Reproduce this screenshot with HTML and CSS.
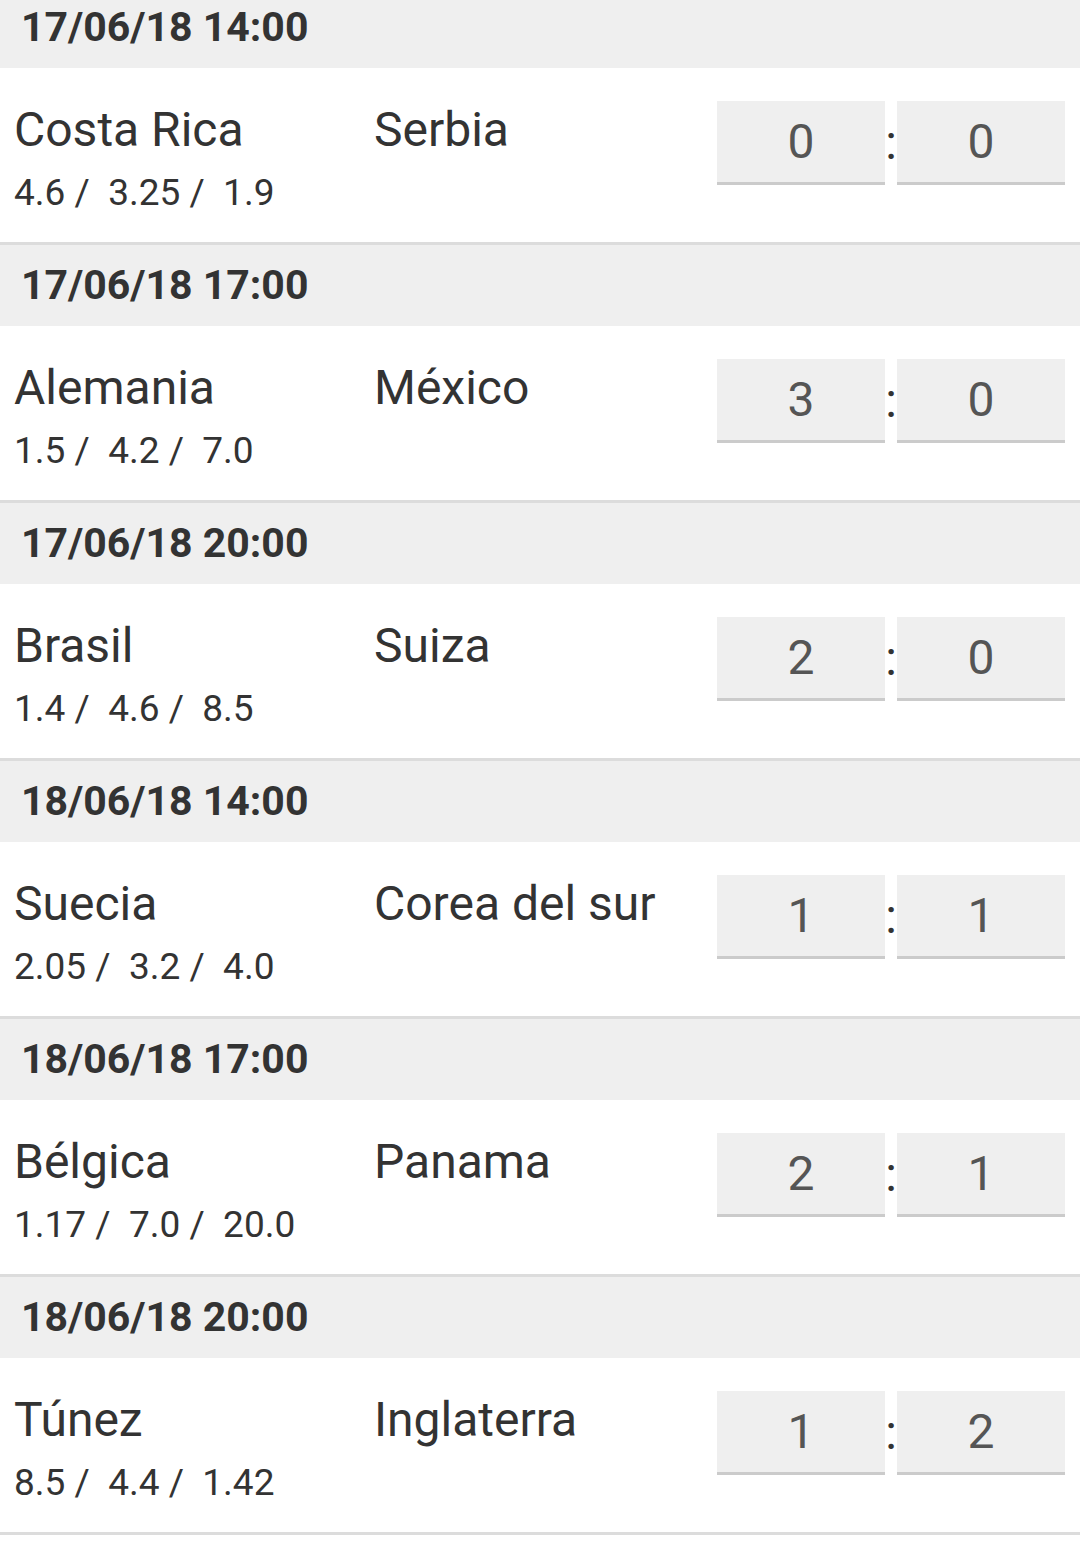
FILE: index.html
```html
<!DOCTYPE html>
<html lang="es">

<head>
    <meta charset="UTF-8">
    <meta name="viewport" content="width=device-width, initial-scale=1.0">
    <title>Partidos</title>
    <link rel="stylesheet" href="styles.css">
</head>

<body>

    <div class="match-list">

        <div class="match-date">17/06/18 14:00</div>
        <div class="match">
            <div class="teams">
                <div class="team home">
                    <div class="name">Costa Rica</div>
                    <div class="odds">4.6 /&nbsp; 3.25 /&nbsp; 1.9</div>
                </div>
                <div class="team away">
                    <div class="name">Serbia</div>
                </div>
            </div>
            <div class="score">
                <div class="goal">0</div>
                <div class="sep">:</div>
                <div class="goal">0</div>
            </div>
        </div>

        <div class="match-date">17/06/18 17:00</div>
        <div class="match">
            <div class="teams">
                <div class="team home">
                    <div class="name">Alemania</div>
                    <div class="odds">1.5 /&nbsp; 4.2 /&nbsp; 7.0</div>
                </div>
                <div class="team away">
                    <div class="name">México</div>
                </div>
            </div>
            <div class="score">
                <div class="goal">3</div>
                <div class="sep">:</div>
                <div class="goal">0</div>
            </div>
        </div>

        <div class="match-date">17/06/18 20:00</div>
        <div class="match">
            <div class="teams">
                <div class="team home">
                    <div class="name">Brasil</div>
                    <div class="odds">1.4 /&nbsp; 4.6 /&nbsp; 8.5</div>
                </div>
                <div class="team away">
                    <div class="name">Suiza</div>
                </div>
            </div>
            <div class="score">
                <div class="goal">2</div>
                <div class="sep">:</div>
                <div class="goal">0</div>
            </div>
        </div>

        <div class="match-date">18/06/18 14:00</div>
        <div class="match">
            <div class="teams">
                <div class="team home">
                    <div class="name">Suecia</div>
                    <div class="odds">2.05 /&nbsp; 3.2 /&nbsp; 4.0</div>
                </div>
                <div class="team away">
                    <div class="name">Corea del sur</div>
                </div>
            </div>
            <div class="score">
                <div class="goal">1</div>
                <div class="sep">:</div>
                <div class="goal">1</div>
            </div>
        </div>

        <div class="match-date">18/06/18 17:00</div>
        <div class="match">
            <div class="teams">
                <div class="team home">
                    <div class="name">Bélgica</div>
                    <div class="odds">1.17 /&nbsp; 7.0 /&nbsp; 20.0</div>
                </div>
                <div class="team away">
                    <div class="name">Panama</div>
                </div>
            </div>
            <div class="score">
                <div class="goal">2</div>
                <div class="sep">:</div>
                <div class="goal">1</div>
            </div>
        </div>

        <div class="match-date">18/06/18 20:00</div>
        <div class="match">
            <div class="teams">
                <div class="team home">
                    <div class="name">Túnez</div>
                    <div class="odds">8.5 /&nbsp; 4.4 /&nbsp; 1.42</div>
                </div>
                <div class="team away">
                    <div class="name">Inglaterra</div>
                </div>
            </div>
            <div class="score">
                <div class="goal">1</div>
                <div class="sep">:</div>
                <div class="goal">2</div>
            </div>
        </div>

    </div>

</body>

</html>
```

FILE: styles.css
```css
* {
    margin: 0;
    padding: 0;
    box-sizing: border-box;
}

body {
    font-family: 'Roboto', 'Liberation Sans', sans-serif;
    background-color: #fff;
    color: #333;
    overflow: hidden;
}

/* lista desplazada: la primera cabecera queda cortada arriba */
.match-list {
    margin-top: -13px;
}

.match-date {
    height: 81px;
    display: flex;
    align-items: center;
    padding-left: 21px;
    background-color: #efefef;
    font-size: 41px;
    font-weight: 700;
    line-height: 1;
    color: #333;
}

.match {
    display: flex;
    align-items: flex-start;
    padding: 0 15px 0 14px;
    background-color: #fff;
    border-bottom: 3px solid #dcdcdc;
}

.teams {
    flex: 1;
    display: flex;
    padding: 38px 0 31px;
}

.team .name {
    font-size: 48px;
    line-height: 1;
    color: #333;
}

.team .odds {
    margin-top: 20px;
    font-size: 37px;
    line-height: 1;
    color: #333;
}

.team.home {
    width: 360px;
}

.score {
    display: flex;
    margin-top: 33px;
}

.goal {
    width: 168px;
    height: 84px;
    display: flex;
    align-items: center;
    justify-content: center;
    background-color: #efefef;
    border-bottom: 3px solid #cbcbcb;
    font-size: 48px;
    line-height: 1;
    color: #555;
}

.sep {
    width: 12px;
    display: flex;
    align-items: center;
    justify-content: center;
    font-size: 48px;
    line-height: 1;
    color: #333;
}
```
